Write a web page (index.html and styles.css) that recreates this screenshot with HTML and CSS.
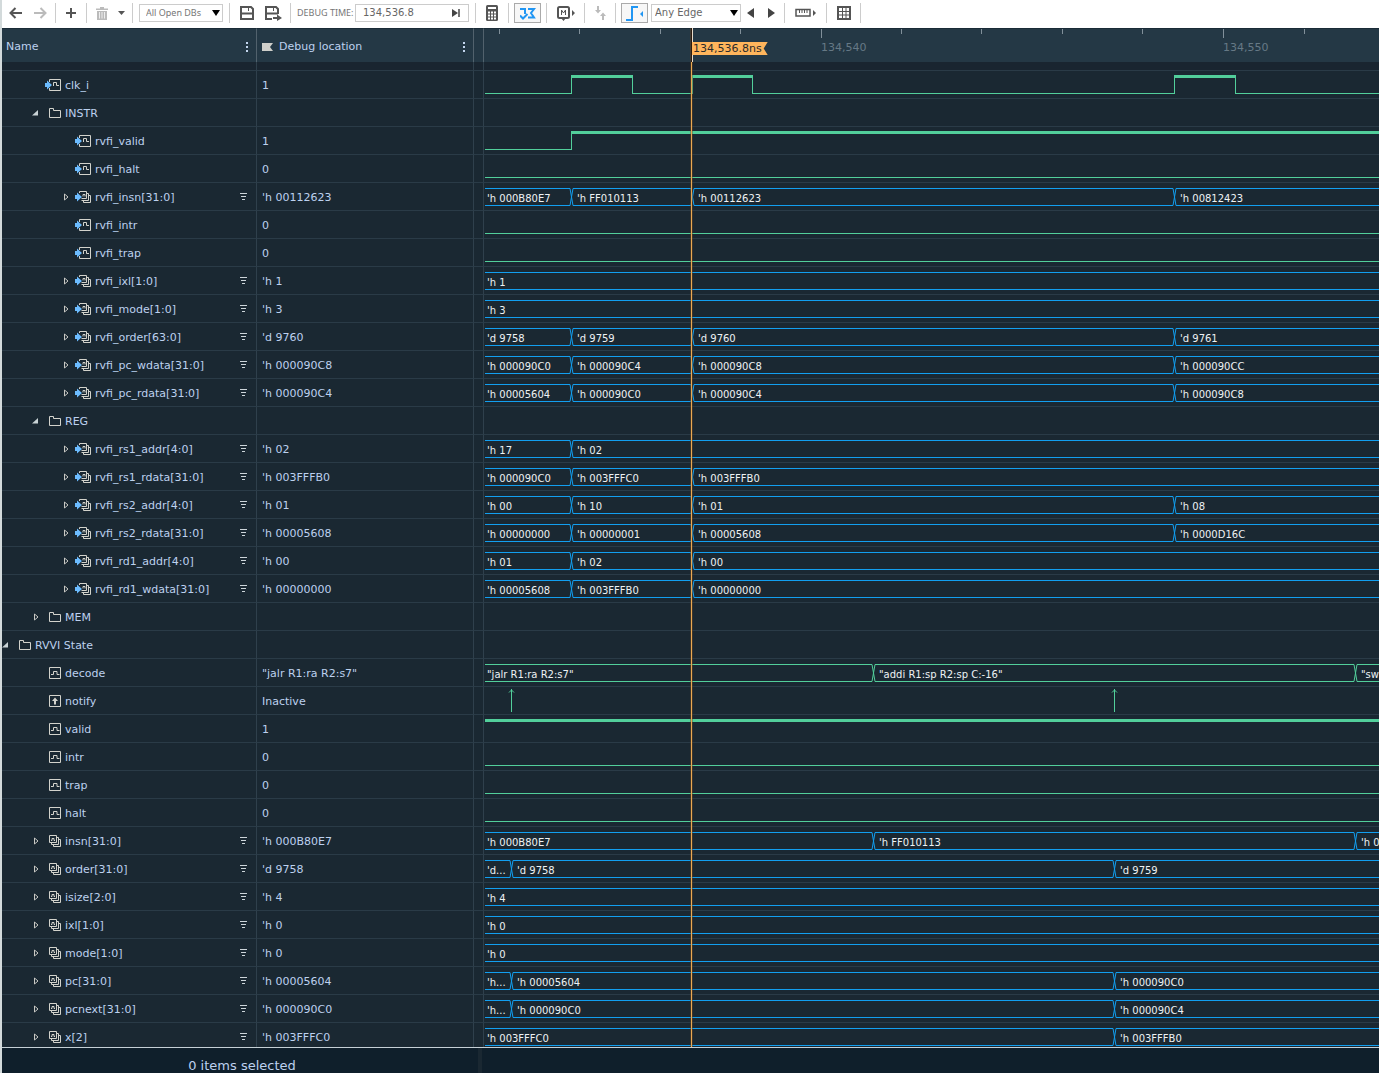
FILE: index.html
```html
<!DOCTYPE html>
<html lang="en">
<head>
<meta charset="utf-8">
<title>Waveform viewer</title>
<link rel="stylesheet" href="styles.css">
</head>
<body>
<svg class="sprite" aria-hidden="true">
  <symbol id="i-signal" viewBox="0 0 16 13"><path d="M4.500.5h11v11h-11zM6 7.500h2.500v-3h3.500v3h2.500" fill="none" stroke="#d3d3cc"/></symbol>
  <symbol id="i-input" viewBox="0 0 16 13"><path d="M4.500 3V.5h11v11h-11V9M8.500 7v-3.500h3v3h2.500" fill="none" stroke="#d3d3cc"/><path d="M0 4h2V1.500l5 4.500-5 4.500V8H0z" fill="#6cbcff"/></symbol>
  <symbol id="i-bus" viewBox="0 0 16 13"><path d="M4.500.5h7v7h-7zM11.500 2.500h2v7h-7v-2M13.500 4.500h2v7h-7v-2M6 5.500h1v-2h2v2h1" fill="none" stroke="#d3d3cc"/></symbol>
  <symbol id="i-inbus" viewBox="0 0 16 13"><path d="M4.500 2V.5h7v7h-5M11.500 2.500h2v7h-7M13.500 4.500h2v7h-7v-2M8 5.500v-2h2v2" fill="none" stroke="#d3d3cc"/><path d="M0 4h2V1.500l5 4.500-5 4.500V8H0z" fill="#6cbcff"/></symbol>
  <symbol id="i-event" viewBox="0 0 16 13"><path d="M4.500.5h11v11h-11z" fill="none" stroke="#d3d3cc"/><path d="M10 2.500l3 3.500h-2v3.500H9V6H7z" fill="#d3d3cc"/></symbol>
  <symbol id="i-folder" viewBox="0 0 16 13"><path d="M4.500 10.500v-9h4v2h7v7z" fill="none" stroke="#d3d3cc"/></symbol>
  <symbol id="i-open" viewBox="0 0 8 8"><path d="M6 1v5.500H0z" fill="#c9d3d6"/></symbol>
  <symbol id="i-closed" viewBox="0 0 8 8"><path d="M2.500 1v6L6 4z" fill="none" stroke="#c9c9c4"/></symbol>
  <symbol id="i-filter" viewBox="0 0 8 8"><path d="M0 .5h7M1 3.500h5M2 6.500h3" stroke="#cdd5da"/></symbol>
</svg>

<div class="app">
  <header class="toolbar">
    <button class="tool" aria-label="Back"><svg width="14" height="12"><path d="M13 6H2M6.500 1L1.500 6l5 5" fill="none" stroke="#555" stroke-width="2"/></svg></button>
    <button class="tool" aria-label="Forward"><svg width="14" height="12"><path d="M1 6h11M7.500 1l5 5-5 5" fill="none" stroke="#bbb" stroke-width="2"/></svg></button>
    <span class="sep"></span>
    <button class="tool" aria-label="Add"><svg width="12" height="12"><path d="M6 1v10M1 6h10" stroke="#555" stroke-width="2"/></svg></button>
    <span class="sep"></span>
    <button class="tool" aria-label="Delete"><svg width="12" height="13"><path d="M4 0h4v1.500h4V3H0V1.500h4zM1 4h10v9H1z" fill="#bbb"/><path d="M3.500 5v6.500M6 5v6.500M8.500 5v6.500" stroke="#eee"/></svg></button>
    <button class="tool thin" aria-label="Delete options"><svg width="7" height="4"><path d="M0 0h7L3.500 4z" fill="#555"/></svg></button>
    <span class="sep"></span>
    <span class="pick db"><select aria-label="Database"><option>All Open DBs</option></select></span>
    <span class="sep"></span>
    <button class="tool mid" aria-label="Save"><svg width="14" height="14"><path d="M1 1h10l2 2v10H1zM1 7.500h12" fill="none" stroke="#555" stroke-width="2"/><path d="M8.500 2v3" stroke="#555"/></svg></button>
    <button class="tool mid" aria-label="Save as"><svg width="17" height="15"><path d="M7 13H1V1h10l2 2v5M1 7.500h12" fill="none" stroke="#555" stroke-width="2"/><path d="M8.500 2v3" stroke="#555"/><path d="M8 11h4V8.500l5 3.500-5 3V13H8z" fill="#555"/></svg></button>
    <span class="sep"></span>
    <label class="time-label" for="time">DEBUG TIME:</label>
    <span class="time"><input id="time" value="134,536.8"><button class="step" aria-label="Go to time"><svg width="8" height="8"><path d="M0 0l6 4-6 4z" fill="#444"/><path d="M7 0v8" stroke="#444" stroke-width="1.500"/></svg></button></span>
    <span class="sep"></span>
    <button class="tool cal" aria-label="Calculator"><svg width="12" height="16"><rect width="12" height="16" rx="1.500" fill="#555"/><path d="M2 3h8" stroke="#fff" stroke-width="2"/><path d="M2 7.500h8M2 10.500h8M2 13.500h8" stroke="#fff" stroke-width="2" stroke-dasharray="2 1"/></svg></button>
    <span class="sep"></span>
    <button class="tool toggle" aria-label="Follow marker" aria-pressed="true"><svg width="16" height="13"><path d="M0 2h6M5 1v6M8 2h6l-3 4 3 4.500H8" fill="none" stroke="#2196f3" stroke-width="2"/><path d="M0 8.500l3 3L7.500 7" fill="none" stroke="#2196f3" stroke-width="2"/></svg></button>
    <span class="sep"></span>
    <button class="tool wide" aria-label="Marker"><svg width="18" height="15"><rect x="1" y="1" width="11" height="11" rx="1.500" fill="none" stroke="#555" stroke-width="2"/><path d="M4.500 9V4l2 3 2-3v5" fill="none" stroke="#555"/><path d="M4 12h5l-2.500 3zM15 4l3 3-3 3z" fill="#555"/></svg></button>
    <span class="sep"></span>
    <button class="tool" aria-label="Collapse"><svg width="11" height="14"><path d="M2 0h2v4h2L3 7.500 0 4h2zM7 14h2v-4h2L8 6.500 5 10h2z" fill="#bbb"/></svg></button>
    <span class="sep"></span>
    <button class="tool toggle" aria-label="Edge search" aria-pressed="true"><svg width="18" height="15"><path d="M0 14h6V1h6" fill="none" stroke="#2196f3" stroke-width="2"/><path d="M17 5v6l-3-3z" fill="#2196f3"/></svg></button>
    <span class="pick edge"><select aria-label="Edge type"><option>Any Edge</option></select></span>
    <button class="tool nav" aria-label="Previous edge"><svg width="8" height="10"><path d="M7 0v10L0 5z" fill="#444"/></svg></button>
    <button class="tool nav" aria-label="Next edge"><svg width="8" height="10"><path d="M1 0v10l7-5z" fill="#444"/></svg></button>
    <span class="sep"></span>
    <button class="tool ruler-btn" aria-label="Measure"><svg width="22" height="10"><path d="M1 1.500h14v6.500H1z" fill="none" stroke="#555" stroke-width="1.500"/><path d="M4.500 2v3M7 2v3M9.500 2v3M12 2v3" stroke="#555"/><path d="M18 2l3 3-3 3z" fill="#555"/></svg></button>
    <span class="sep"></span>
    <button class="tool mid" aria-label="Grid"><svg width="14" height="14"><path d="M1 1h12v12H1z" fill="none" stroke="#555" stroke-width="2"/><path d="M5.500 1v12M9 1v12M1 5.500h12M1 9h12" stroke="#555"/></svg></button>
    <span class="sep"></span>
  </header>

  <main class="viewer">
    <table class="signals">
      <colgroup><col class="c-name"><col class="c-value"><col class="c-gap"><col></colgroup>
      <thead>
        <tr>
          <th><span class="head">Name<svg class="dots" width="2" height="10"><path d="M0 0h2v2H0zM0 4h2v2H0zM0 8h2v2H0z" fill="#c3d5ee"/></svg></span></th>
          <th><span class="head"><svg class="flag" width="11" height="8"><path d="M0 0h11L8 4l3 4H0z" fill="#cfcfca"/></svg>Debug location<svg class="dots" width="2" height="10"><path d="M0 0h2v2H0zM0 4h2v2H0zM0 8h2v2H0z" fill="#c3d5ee"/></svg></span></th>
          <th></th>
          <th class="ruler"><svg id="ruler" width="100%" height="34"></svg></th>
        </tr>
      </thead>
      <tbody id="rows">
        <tr class="spacer"><td></td><td></td><td></td><td></td></tr>
      </tbody>
    </table>
    <div class="cursor"><span class="cursor-label">134,536.8ns</span></div>
  </main>

  <footer class="status"><span class="count">0 items selected</span></footer>
</div>
<script src="script.js"></script>
</body>
</html>
```
FILE: styles.css
```css
* { box-sizing: border-box; }

body {
  margin: 0;
  background: #1a2832;
  color: #bdd1ef;
  font: 11px/14px "DejaVu Sans", Verdana, sans-serif;
}

button {
  padding: 0;
  border: 0;
  background: none;
  display: flex;
  align-items: center;
  justify-content: center;
}

.sprite { display: none; }

.app {
  display: flex;
  flex-direction: column;
  height: 100vh;
  border-left: 2px solid #d3dadb;
}

/* Toolbar */
.toolbar {
  display: flex;
  align-items: center;
  flex: none;
  height: 28px;
  padding: 0 0 2px 2px;
  background: #fff;
  color: #666;
}
.tool { flex: none; width: 24px; height: 20px; }
.tool.thin { width: 15px; }
.tool.mid { width: 27px; }
.tool.cal { width: 26px; }
.tool.wide { width: 31px; }
.tool.ruler-btn { width: 35px; }
.tool.nav { width: 20px; }
.tool.toggle {
  width: 27px;
  margin: 0 2px;
  border: 1px solid #aaa;
  background: #f7f7f7;
}
.sep { flex: none; width: 1px; height: 20px; margin: 0 3px; background: #ccc; }

.pick { position: relative; flex: none; height: 18px; }
.pick::after {
  content: "";
  position: absolute;
  right: 3px;
  top: 6px;
  border: 4px solid transparent;
  border-top: 6px solid #000;
  border-bottom: 0;
  pointer-events: none;
}
.pick select {
  width: 100%;
  height: 18px;
  padding: 0 6px;
  border: 1px solid #ccc;
  border-radius: 0;
  background: #fff;
  color: #777;
  appearance: none;
  font: 9px/16px "Noto Sans", sans-serif;
}
.db { width: 84px; margin: 0 3px; }
.edge { width: 90px; margin-left: 1px; }
.edge select { padding: 0 3px; color: #666; font: 10px/16px "DejaVu Sans", sans-serif; }

.time-label { width: 55px; margin: 0 3px; font: 9px/14px "Noto Sans", sans-serif; white-space: nowrap; color: #777; }
.time {
  display: flex;
  flex: none;
  width: 114px;
  height: 18px;
  margin-right: 3px;
  border: 1px solid #ccc;
}
.time input {
  flex: 1;
  min-width: 0;
  padding: 0 0 0 7px;
  border: 0;
  color: #666;
  font: 10px/16px "DejaVu Sans", sans-serif;
}
.step { width: 24px; }

/* Signal table */
.viewer { position: relative; flex: 1; min-height: 0; overflow: hidden; }
.signals { width: 100%; table-layout: fixed; border-collapse: separate; border-spacing: 0; }
.c-name { width: 255px; }
.c-value { width: 217px; }
.c-gap { width: 10px; }

th {
  height: 34px;
  padding: 0;
  border-top: 1px solid #1a2b37;
  border-right: 1px solid #52626d;
  background: #243845;
  font-weight: normal;
  text-align: left;
}
th:last-child, td:last-child { border-right: 0; }
.head { display: flex; align-items: center; gap: 6px; padding: 2px 8px 0 4px; }
th + th .head { padding-left: 5px; }
.dots { margin-left: auto; }
.ruler svg { display: block; margin-top: -1px; }

td {
  height: 28px;
  padding: 0;
  border-right: 1px solid #2f404c;
  border-bottom: 1px solid #2a3b47;
  white-space: nowrap;
}
.spacer td { height: 9px; background: #192530; }
td.value { padding: 2px 0 0 5px; }
.name { display: flex; align-items: center; height: 27px; padding: 2px 8px 0 0; }
.level-1 { padding-left: 30px; }
.level-2 { padding-left: 60px; }
.expander { flex: none; width: 13px; justify-content: flex-start; }
.expander, .filter { padding-bottom: 2px; }
.expander svg, .filter svg { display: block; width: 8px; height: 8px; }
.icon { flex: none; width: 16px; height: 13px; margin-right: 4px; }
.filter { margin-left: auto; }
.wave { display: block; width: 100%; height: 27px; }
.wave path { fill: none; stroke-width: 1; }
.wave text { fill: #eef2f4; font-size: 10px; }
.green { stroke: #52cf9b; }
.blue { stroke: #129ff0; }
.wave .high { stroke-width: 3; }
.tick { stroke: #81909a; }
.tick-label { fill: #667985; }

.cursor {
  position: absolute;
  top: 0;
  bottom: 0;
  left: 689px;
  width: 1px;
  background: linear-gradient(#2c1c10 34px, #eaa952 34px);
  box-shadow: 0 0 0 1px rgba(110, 70, 30, 0.4);
}
.cursor::before {
  content: "";
  position: absolute;
  left: 1px;
  width: 1px;
  height: 34px;
  background: #e8dccb;
}
.cursor-label {
  position: absolute;
  top: 14px;
  left: 1px;
  padding: 0 6px 0 1px;
  background: #ffb55c;
  color: #2b2b2b;
  line-height: 13px;
  clip-path: polygon(0 0, 100% 0, calc(100% - 4px) 50%, 100% 100%, 0 100%);
}

/* Status bar */
.status { flex: none; height: 26px; border-top: 1px solid #c5d0d6; background: #0f1f2b; }
.count {
  display: block;
  width: 480px;
  height: 25px;
  padding-left: 4px;
  border-right: 4px solid #1a2832;
  font-size: 13px;
  line-height: 36px;
  text-align: center;
}
```
FILE: script.js
```js
// Pixel offsets of the value changes shared by several signals.
const A = 87, B = 208, C = 690;   // retire channel
const D = 389, E = 871;           // decode
const N = 27, M = 630;            // notify
const END = 4000;

// [level, icon, name, value, wave, expander]
const bus = (...v) => ({ type: 'blue', v });
const low = { type: 'bits', v: [[0, 0]] };
const signals = [
  [1, 'input', 'clk_i', '1', { type: 'bits', v: [[0, 0], [A, 1], [148, 0], [B, 1], [268, 0], [C, 1], [751, 0]] }],
  [1, 'folder', 'INSTR', '', null, 'open'],
  [2, 'input', 'rvfi_valid', '1', { type: 'bits', v: [[0, 0], [A, 1]] }],
  [2, 'input', 'rvfi_halt', '0', low],
  [2, 'inbus', 'rvfi_insn[31:0]', "'h 00112623", bus([0, "'h 000B80E7"], [A, "'h FF010113"], [B, "'h 00112623"], [C, "'h 00812423"])],
  [2, 'input', 'rvfi_intr', '0', low],
  [2, 'input', 'rvfi_trap', '0', low],
  [2, 'inbus', 'rvfi_ixl[1:0]', "'h 1", bus([0, "'h 1"])],
  [2, 'inbus', 'rvfi_mode[1:0]', "'h 3", bus([0, "'h 3"])],
  [2, 'inbus', 'rvfi_order[63:0]', "'d 9760", bus([0, "'d 9758"], [A, "'d 9759"], [B, "'d 9760"], [C, "'d 9761"])],
  [2, 'inbus', 'rvfi_pc_wdata[31:0]', "'h 000090C8", bus([0, "'h 000090C0"], [A, "'h 000090C4"], [B, "'h 000090C8"], [C, "'h 000090CC"])],
  [2, 'inbus', 'rvfi_pc_rdata[31:0]', "'h 000090C4", bus([0, "'h 00005604"], [A, "'h 000090C0"], [B, "'h 000090C4"], [C, "'h 000090C8"])],
  [1, 'folder', 'REG', '', null, 'open'],
  [2, 'inbus', 'rvfi_rs1_addr[4:0]', "'h 02", bus([0, "'h 17"], [A, "'h 02"])],
  [2, 'inbus', 'rvfi_rs1_rdata[31:0]', "'h 003FFFB0", bus([0, "'h 000090C0"], [A, "'h 003FFFC0"], [B, "'h 003FFFB0"])],
  [2, 'inbus', 'rvfi_rs2_addr[4:0]', "'h 01", bus([0, "'h 00"], [A, "'h 10"], [B, "'h 01"], [C, "'h 08"])],
  [2, 'inbus', 'rvfi_rs2_rdata[31:0]', "'h 00005608", bus([0, "'h 00000000"], [A, "'h 00000001"], [B, "'h 00005608"], [C, "'h 0000D16C"])],
  [2, 'inbus', 'rvfi_rd1_addr[4:0]', "'h 00", bus([0, "'h 01"], [A, "'h 02"], [B, "'h 00"])],
  [2, 'inbus', 'rvfi_rd1_wdata[31:0]', "'h 00000000", bus([0, "'h 00005608"], [A, "'h 003FFFB0"], [B, "'h 00000000"])],
  [1, 'folder', 'MEM', '', null, 'closed'],
  [0, 'folder', 'RVVI State', '', null, 'open'],
  [1, 'signal', 'decode', '"jalr R1:ra R2:s7"', { type: 'green', v: [[0, '"jalr R1:ra R2:s7"'], [D, '"addi R1:sp R2:sp C:-16"'], [E, '"sw']] }],
  [1, 'event', 'notify', 'Inactive', { type: 'event', v: [N, M] }],
  [1, 'signal', 'valid', '1', { type: 'bits', v: [[0, 1]] }],
  [1, 'signal', 'intr', '0', low],
  [1, 'signal', 'trap', '0', low],
  [1, 'signal', 'halt', '0', low],
  [1, 'bus', 'insn[31:0]', "'h 000B80E7", bus([0, "'h 000B80E7"], [D, "'h FF010113"], [E, "'h 0"])],
  [1, 'bus', 'order[31:0]', "'d 9758", bus([0, "'d..."], [N, "'d 9758"], [M, "'d 9759"])],
  [1, 'bus', 'isize[2:0]', "'h 4", bus([0, "'h 4"])],
  [1, 'bus', 'ixl[1:0]', "'h 0", bus([0, "'h 0"])],
  [1, 'bus', 'mode[1:0]', "'h 0", bus([0, "'h 0"])],
  [1, 'bus', 'pc[31:0]', "'h 00005604", bus([0, "'h..."], [N, "'h 00005604"], [M, "'h 000090C0"])],
  [1, 'bus', 'pcnext[31:0]', "'h 000090C0", bus([0, "'h..."], [N, "'h 000090C0"], [M, "'h 000090C4"])],
  [1, 'bus', 'x[2]', "'h 003FFFC0", bus([0, "'h 003FFFC0"], [M, "'h 003FFFB0"])],
];

const path = (cls, d) => `<path class="${cls}" d="${d}"/>`;

function drawBits(v) {
  let out = '';
  v.forEach(([x, bit], i) => {
    const start = i ? x : 1;
    const end = i + 1 < v.length ? v[i + 1][0] : END;
    out += bit ? path('green high', `M${start} 5.5H${end + 1}`) : path('green', `M${start} 22.5H${end + 1}`);
    if (i) out += path('green', `M${x + 0.5} 4V23`);
  });
  return out;
}

function drawBus(v, color) {
  let out = '';
  v.forEach(([x, label], i) => {
    const last = i + 1 === v.length;
    const end = last ? END : v[i + 1][0];
    const rise = i ? `M${x - 1} 22.5L${x + 2} 5.5` : 'M1 5.5';
    const fall = i ? `M${x - 1} 5.5L${x + 2} 22.5` : 'M1 22.5';
    out += path(color, `${rise}H${end - 1}${fall}H${end - 1}`);
    out += `<text x="${i ? x + 6 : 3}" y="19">${label}</text>`;
  });
  return out;
}

const drawEvents = v => v.map(x => path('green', `M${x + 0.5} 2V25M${x - 2} 5.5L${x + 0.5} 3L${x + 3} 5.5`)).join('');

function draw(w) {
  if (!w) return '';
  if (w.type === 'bits') return drawBits(w.v);
  if (w.type === 'event') return drawEvents(w.v);
  return drawBus(w.v, w.type);
}

const use = id => `<use href="#i-${id}"/>`;

document.getElementById('rows').insertAdjacentHTML('beforeend', signals.map(([level, icon, name, value, wave, state]) => {
  const isBus = icon.endsWith('bus');
  const arrow = state || (isBus ? 'closed' : '');
  const expander = arrow ? `<button class="expander" aria-label="Toggle ${name}"><svg>${use(arrow)}</svg></button>` : '<span class="expander"></span>';
  const filter = isBus ? `<button class="filter" aria-label="Radix of ${name}"><svg>${use('filter')}</svg></button>` : '';
  return `<tr><td><div class="name level-${level}">${expander}<svg class="icon">${use(icon)}</svg>${name}${filter}</div></td>
    <td class="value">${value}</td><td></td><td><svg class="wave">${draw(wave)}</svg></td></tr>`;
}).join(''));

// Ruler: minor ticks every 2 ns, labelled ones every 10 ns.
const ticks = [15, 95, 176, 256, 337, 417, 497, 578, 658, 739, 820];
const labels = { 337: '134,540', 739: '134,550' };
document.getElementById('ruler').innerHTML = ticks.map(x => {
  const text = labels[x];
  return path('tick', `M${x + 0.5} 1V${text ? 10 : 6}`) + (text ? `<text class="tick-label" x="${x}" y="23">${text}</text>` : '');
}).join('');
```
